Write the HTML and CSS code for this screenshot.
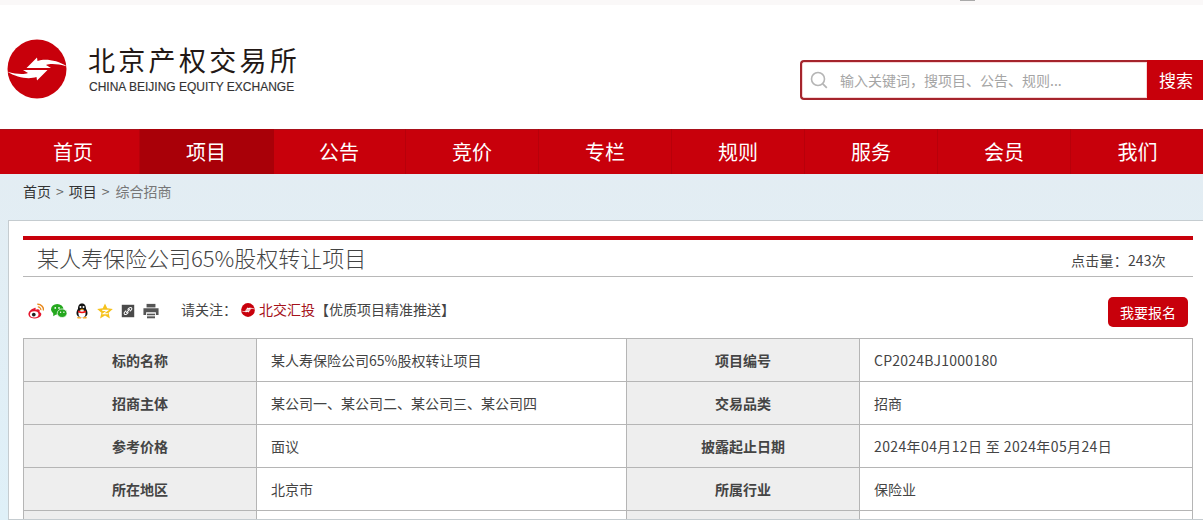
FILE: index.html
```html
<!DOCTYPE html>
<html lang="zh-CN">
<head>
<meta charset="utf-8">
<title>某人寿保险公司65%股权转让项目</title>
<link rel="stylesheet" href="styles.css">
</head>
<body>
<div class="topstrip"><span class="topmark"></span></div>
<header class="header">
  <div class="brand">
    <svg class="logo" viewBox="0 0 60 60" width="60" height="60" aria-hidden="true">
      <circle cx="30" cy="30" r="29.500" fill="#c8000b"/>
      <path d="M19.500 29 L30 18.500 L30.500 22 C38 19.500 50 21 60 27.500 C50 24.500 43 24.500 39 26 L44 29Z" fill="#fff"/>
      <path d="M40.500 31 L30 41.500 L29.500 38 C22 40.500 10 39 0 32.500 C10 35.500 17 35.500 21 34 L16 31Z" fill="#fff"/>
    </svg>
    <div class="brand-text">
      <div class="brand-cn">北京产权交易所</div>
      <div class="brand-en">CHINA BEIJING EQUITY EXCHANGE</div>
    </div>
  </div>
  <form class="search">
    <div class="search-box">
      <svg class="search-icon" viewBox="0 0 18 18" width="18" height="18" aria-hidden="true"><circle cx="8" cy="8" r="6.500" fill="none" stroke="#b5b5b5" stroke-width="1.600"/><path d="M12.800 12.800 L16.800 16.800" stroke="#b5b5b5" stroke-width="1.800"/></svg>
      <span class="search-ph">输入关键词，搜项目、公告、规则...</span>
    </div>
    <div class="search-btn">搜索</div>
  </form>
</header>
<nav class="nav">
  <a class="nav-item">首页</a>
  <a class="nav-item active">项目</a>
  <a class="nav-item">公告</a>
  <a class="nav-item">竞价</a>
  <a class="nav-item">专栏</a>
  <a class="nav-item">规则</a>
  <a class="nav-item">服务</a>
  <a class="nav-item">会员</a>
  <a class="nav-item">我们</a>
</nav>
<main class="stage">
  <div class="crumbs"><a>首页</a><span class="sep">&gt;</span><a>项目</a><span class="sep">&gt;</span><span class="current">综合招商</span></div>
  <section class="card">
    <div class="titlebar">
      <h1 class="title">某人寿保险公司65%股权转让项目</h1>
      <span class="hits">点击量：243次</span>
    </div>
    <div class="toolbar">
      <div class="icons">
        <svg class="ico" viewBox="0 0 18 18" aria-hidden="true"><path d="M7.500 5.500 C3.500 6.500 0 10 0.500 13 C1 16.500 5 17.500 8 17.500 C12 17.500 15 15 15 12.500 C15 10.800 13.500 10.500 13 10 C13.500 8.500 13.200 7 11 7 C10 7 9 7.500 8.500 7.700 C8.800 6 8.700 5.300 7.500 5.500Z" fill="#e6162d"/><ellipse cx="7" cy="12.800" rx="4.800" ry="3.400" fill="#fff"/><circle cx="6.500" cy="13" r="2.100" fill="#222"/><path d="M10.500 1.500 A6.500 6.500 0 0 1 17.500 8.500" fill="none" stroke="#e8891c" stroke-width="1.700"/><path d="M11 4.500 A3.300 3.300 0 0 1 14.500 8" fill="none" stroke="#e8891c" stroke-width="1.400"/></svg>
        <svg class="ico" viewBox="0 0 18 18" aria-hidden="true"><ellipse cx="7" cy="7" rx="7" ry="6" fill="#25a81e"/><path d="M2.500 11 L2.500 15 L6.500 12.500Z" fill="#25a81e"/><ellipse cx="12.500" cy="11.500" rx="5.500" ry="4.800" fill="#25a81e" stroke="#fff" stroke-width=".8"/><circle cx="4.800" cy="5.500" r="1" fill="#fff"/><circle cx="9" cy="5.500" r="1" fill="#fff"/><circle cx="10.800" cy="10.500" r=".8" fill="#fff"/><circle cx="14.500" cy="10.500" r=".8" fill="#fff"/></svg>
        <svg class="ico" viewBox="0 0 18 18" aria-hidden="true"><path d="M9 0.500 C5.500 0.500 4.500 3.500 4.500 6.500 C3 8.500 2.500 11 3 13 C4 15 5 16 9 16 C13 16 14 15 15 13 C15.500 11 15 8.500 13.500 6.500 C13.500 3.500 12.500 0.500 9 0.500Z" fill="#111"/><ellipse cx="9" cy="12" rx="4" ry="4" fill="#fff"/><path d="M4.500 8.500 Q9 11 13.500 8.500 L13.500 10.500 Q9 12.500 4.500 10.500Z" fill="#e11"/><path d="M6.500 6.800 Q9 9.200 11.500 6.800 Q9 6 6.500 6.800Z" fill="#f5a623"/><circle cx="7.300" cy="4.500" r="1.100" fill="#fff"/><circle cx="10.700" cy="4.500" r="1.100" fill="#fff"/><path d="M3.500 15.500 L8 16 L8 17.500 L4 17.500Z M14.500 15.500 L10 16 L10 17.500 L14 17.500Z" fill="#f5a623"/></svg>
        <svg class="ico" viewBox="0 0 18 18" aria-hidden="true"><path d="M9 0.500 L11.500 6 L17.800 6.700 L13 10.900 L14.500 17.300 L9 14 L3.500 17.300 L5 10.900 L0.200 6.700 L6.500 6Z" fill="#f6c21c"/><path d="M6 8.300 H12 L7 12 H12.500" fill="none" stroke="#fff" stroke-width="1.200"/></svg>
        <svg class="ico" viewBox="0 0 18 18" aria-hidden="true"><path d="M2 2 H16 V16 H2Z" fill="#4a4a4a"/><path d="M8.500 7.500 L10.500 5.500 Q12 4.500 13 5.500 Q14 6.800 12.500 8 L11 9.500 M9.500 10.500 L7.500 12.500 Q6 13.500 5 12.500 Q4 11.200 5.500 10 L7 8.500 M7 11 L11 7" fill="none" stroke="#fff" stroke-width="1.200"/></svg>
        <svg class="ico" viewBox="0 0 18 18" aria-hidden="true"><rect x="4" y="1" width="10" height="4" fill="#555"/><path d="M0.500 6 H17.500 V13.500 H14.500 V10.500 H3.500 V13.500 H0.500Z" fill="#555"/><rect x="4.500" y="12" width="9" height="1.800" fill="#555"/><rect x="4.500" y="15" width="9" height="2.200" fill="#555"/></svg>
      </div>
      <span class="follow">请关注：</span>
      <svg class="mini-logo" viewBox="0 0 60 60" width="14" height="14" aria-hidden="true"><circle cx="30" cy="30" r="29.500" fill="#c8000b"/><path d="M19.500 29 L30 18.500 L30.500 22 C38 19.500 50 21 60 27.500 C50 24.500 43 24.500 39 26 L44 29Z" fill="#fff"/><path d="M40.500 31 L30 41.500 L29.500 38 C22 40.500 10 39 0 32.500 C10 35.500 17 35.500 21 34 L16 31Z" fill="#fff"/></svg>
      <a class="wx">北交汇投</a>
      <span class="promo">【优质项目精准推送】</span>
      <a class="signup">我要报名</a>
    </div>
    <table class="info">
      <colgroup><col class="c-label"><col class="c-val1"><col class="c-label"><col class="c-val2"></colgroup>
      <tr><th>标的名称</th><td>某人寿保险公司65%股权转让项目</td><th>项目编号</th><td class="code">CP2024BJ1000180</td></tr>
      <tr><th>招商主体</th><td>某公司一、某公司二、某公司三、某公司四</td><th>交易品类</th><td>招商</td></tr>
      <tr><th>参考价格</th><td>面议</td><th>披露起止日期</th><td class="dates">2024年04月12日 至 2024年05月24日</td></tr>
      <tr><th>所在地区</th><td>北京市</td><th>所属行业</th><td>保险业</td></tr>
      <tr><th>&nbsp;</th><td>&nbsp;</td><th>&nbsp;</th><td>&nbsp;</td></tr>
    </table>
  </section>
</main>
</body>
</html>
```
FILE: styles.css
```css
* { box-sizing: border-box; }
html, body { margin: 0; padding: 0; }
body {
  width: 1203px;
  height: 520px;
  overflow: hidden;
  background: #fff;
  color: #333;
  font-family: "Noto Sans CJK SC", "Liberation Sans", sans-serif;
}
a { color: inherit; text-decoration: none; }

.topstrip { height: 5px; background: #faf8f8; padding-left: 960px; }
.topmark { display: block; width: 15px; height: 1px; background: #aaa; }

.header { height: 124px; display: flex; justify-content: space-between; }
.brand { display: flex; padding: 34px 0 0 7px; }
.logo { display: block; }
.brand-text { margin-left: 22px; padding-top: 5px; }
.brand-cn { font-size: 27px; line-height: 32px; letter-spacing: 3.300px; margin-left: -1px; color: #231815; font-weight: 400; white-space: nowrap; }
.brand-en { font-family: "Liberation Sans", sans-serif; font-size: 12px; line-height: 16px; margin-top: 3px; color: #333; white-space: nowrap; -webkit-text-stroke: .15px #333; }

.search { display: flex; margin-top: 55px; height: 40px; }
.search-box { width: 347px; height: 40px; border: 2px solid #a5242c; border-right: 0; border-radius: 4px 0 0 4px; box-shadow: inset 0 0 0 1px #f6d5d7; display: flex; align-items: center; padding-left: 8px; background: #fff; }
.search-icon { flex: none; }
.search-ph { margin-left: 12px; font-size: 14px; color: #a5a5a5; white-space: nowrap; }
.search-btn { width: 56px; height: 40px; padding-left: 2px; background: #c8000b; color: #fff; font-size: 17px; line-height: 40px; text-align: center; }

.nav { height: 45px; background: #c8000b; display: flex; padding-left: 7px; box-shadow: inset 0 1px 0 #a8101a; }
.nav-item { flex: none; width: 133px; color: #fff; font-size: 20px; line-height: 45px; text-align: center; border-right: 1px solid #b8000a; }
.nav-item:last-child { border-right: 0; }
.nav-item.active { background: #a90008; border-right-color: #a90008; box-shadow: 1px 0 0 #a90008; }

.stage { height: 346px; background: linear-gradient(#e3edf3, #dff0f8); padding-left: 8px; }
.crumbs { height: 46px; padding-left: 15px; font-size: 14px; line-height: 35px; color: #333; display: flex; }
.sep { margin: 0 5px; color: #666; }
.current { color: #777; margin-left: 1px; }

.card { height: 300px; overflow: hidden; background: #fff; border: 1px solid #c5ccd0; border-right: 0; padding: 15px 10px 0 14px; }
.titlebar { height: 41px; border-top: 4px solid #c8000b; border-bottom: 1px solid #b8b8b8; display: flex; justify-content: space-between; padding: 0 27px 0 14px; }
.title { margin: 0; font-size: 22px; line-height: 34px; font-weight: 300; color: #444; white-space: nowrap; }
.hits { font-size: 14px; line-height: 41px; letter-spacing: .2px; color: #444; white-space: nowrap; }

.toolbar { height: 61px; display: flex; align-items: flex-start; padding-top: 24px; font-size: 14px; line-height: 16px; color: #444; }
.icons { display: flex; gap: 7px; padding: 2px 0 0 5px; }
.ico { display: block; width: 16px; height: 16px; }
.follow { margin-left: 22px; }
.mini-logo { margin: 2px 4px 0 4px; display: block; }
.wx { color: #a5121a; }
.signup { margin: -4px 5px 0 auto; width: 80px; height: 30px; border-radius: 5px; background: #c8000b; color: #fff; font-size: 14px; line-height: 30px; text-align: center; }

.info { width: 1169px; border-collapse: collapse; table-layout: fixed; font-size: 14px; color: #444; }
.c-label { width: 233px; }
.c-val1 { width: 370px; }
.c-val2 { width: 333px; }
.info th, .info td { height: 43px; border: 1px solid #b5b5b5; padding: 0 14px; white-space: nowrap; line-height: 20px; }
.info th { background: #eee; font-weight: 700; text-align: center; }
.info td { text-align: left; }
.info .code { letter-spacing: .25px; }
.info .dates { letter-spacing: .38px; }
```
